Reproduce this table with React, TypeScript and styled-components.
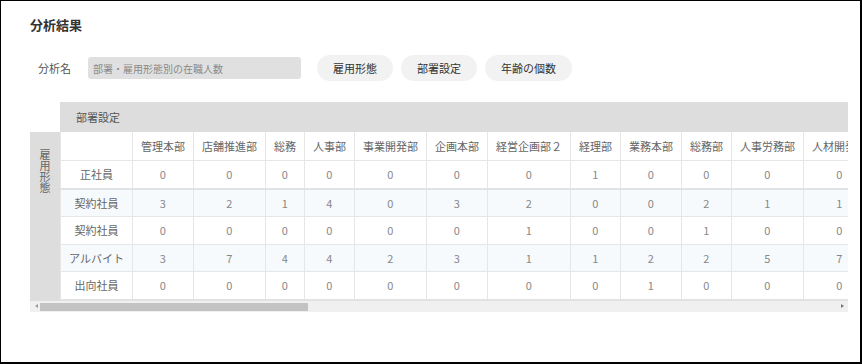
import React from "react";
import styled, { createGlobalStyle } from "styled-components";

const Global = createGlobalStyle`
  html, body { margin: 0; padding: 0; background: #fff; }
  body { font-family: "Noto Sans CJK JP", "Noto Sans", sans-serif; }
`;

const Frame = styled.div`
  box-sizing: border-box;
  width: 862px;
  height: 364px;
  border-style: solid;
  border-color: #000;
  border-width: 1px 2px 2px 1px;
  padding: 15px 0 0 29px;
  overflow: hidden;
`;

const Title = styled.h2`
  margin: 0;
  font-size: 13px;
  font-weight: bold;
  color: #333;
  line-height: 18px;
`;

const FormRow = styled.div`
  display: flex;
  align-items: center;
  margin-top: 21px;
  height: 26px;
`;

const Label = styled.span`
  font-size: 11px;
  color: #555;
  margin-left: 8px;
  width: 34px;
  margin-right: 16px;
  white-space: nowrap;
`;

const NameBox = styled.div`
  box-sizing: border-box;
  width: 213px;
  height: 22px;
  background: #e0e0e0;
  border-radius: 3px;
  padding-left: 5px;
  font-size: 10px;
  color: #888;
  display: flex;
  align-items: center;
  margin-right: 16px;
`;

const Pills = styled.div`
  display: flex;
  gap: 8px;
`;

const Pill = styled.button`
  height: 26px;
  border: none;
  border-radius: 13px;
  background: #f2f2f2;
  padding: 0 16px;
  font-family: inherit;
  font-size: 11px;
  color: #333;
  cursor: pointer;
`;

const Pivot = styled.div`
  width: 818px;
  margin-top: 21px;
`;

const ColBand = styled.div`
  margin-left: 30px;
  height: 30px;
  background: #dddddd;
  display: flex;
  align-items: center;
  padding-left: 16px;
  font-size: 11px;
  color: #555;
`;

const Body = styled.div`
  display: flex;
`;

const RowBand = styled.div`
  width: 30px;
  flex: none;
  background: #dddddd;
  display: flex;
  justify-content: center;
  padding-top: 17px;
  box-sizing: border-box;
`;

const VerticalText = styled.span`
  writing-mode: vertical-rl;
  font-size: 11px;
  line-height: 12px;
  color: #666;
`;

const Clip = styled.div`
  flex: 1;
  overflow: hidden;
`;

const Table = styled.table`
  border-collapse: collapse;
  font-size: 11px;
  white-space: nowrap;
`;

const Th = styled.th`
  height: 28px;
  padding: 0 8px;
  font-weight: normal;
  color: #666;
  border-left: 1px solid #e6e6e6;
  border-right: 1px solid #e6e6e6;
  border-bottom: 1px solid #e6e6e6;
  text-align: center;
`;

const Tr = styled.tr<{ $striped: boolean; $thick?: boolean }>`
  background: ${(p) => (p.$striped ? "#f6fafc" : "#fff")};
  border-bottom: ${(p) => (p.$thick ? "2px solid #e2e2e2" : "1px solid #e6e6e6")};
`;

const Td = styled.td<{ $head?: boolean }>`
  height: 26.5px;
  padding: 0 8px;
  text-align: center;
  color: ${(p) => (p.$head ? "#666" : "#888")};
  border-left: 1px solid #e6e6e6;
  border-right: 1px solid #e6e6e6;
`;

const ScrollBar = styled.div`
  height: 11px;
  background: #f0f0f0;
  display: flex;
  align-items: center;
  position: relative;
`;

const Arrow = styled.span<{ $right?: boolean }>`
  width: 0;
  height: 0;
  border-top: 2px solid transparent;
  border-bottom: 2px solid transparent;
  ${(p) =>
    p.$right
      ? "border-left: 3px solid #777; margin-left: auto; margin-right: 4px;"
      : "border-right: 3px solid #999; margin-left: 5px;"}
`;

const Thumb = styled.div`
  position: absolute;
  left: 10px;
  top: 2px;
  width: 268px;
  height: 8px;
  background: #c3c3c3;
`;

const cols = [
  "管理本部",
  "店舗推進部",
  "総務",
  "人事部",
  "事業開発部",
  "企画本部",
  "経営企画部２",
  "経理部",
  "業務本部",
  "総務部",
  "人事労務部",
  "人材開発部",
];

const rows: { name: string; vals: number[] }[] = [
  { name: "正社員", vals: [0, 0, 0, 0, 0, 0, 0, 1, 0, 0, 0, 0] },
  { name: "契約社員", vals: [3, 2, 1, 4, 0, 3, 2, 0, 0, 2, 1, 1] },
  { name: "契約社員", vals: [0, 0, 0, 0, 0, 0, 1, 0, 0, 1, 0, 0] },
  { name: "アルバイト", vals: [3, 7, 4, 4, 2, 3, 1, 1, 2, 2, 5, 7] },
  { name: "出向社員", vals: [0, 0, 0, 0, 0, 0, 0, 0, 1, 0, 0, 0] },
];

export default function App() {
  return (
    <>
      <Global />
      <Frame>
        <Title>分析結果</Title>
        <FormRow>
          <Label>分析名</Label>
          <NameBox>部署・雇用形態別の在職人数</NameBox>
          <Pills>
            <Pill>雇用形態</Pill>
            <Pill>部署設定</Pill>
            <Pill>年齢の個数</Pill>
          </Pills>
        </FormRow>
        <Pivot>
          <ColBand>部署設定</ColBand>
          <Body>
            <RowBand>
              <VerticalText>雇用形態</VerticalText>
            </RowBand>
            <Clip>
              <Table>
                <thead>
                  <tr>
                    <Th></Th>
                    {cols.map((c) => (
                      <Th key={c}>{c}</Th>
                    ))}
                  </tr>
                </thead>
                <tbody>
                  {rows.map((r, i) => (
                    <Tr key={i} $striped={i % 2 === 1} $thick={i === 0 || i === rows.length - 1}>
                      <Td $head>{r.name}</Td>
                      {r.vals.map((v, j) => (
                        <Td key={j}>{v}</Td>
                      ))}
                    </Tr>
                  ))}
                </tbody>
              </Table>
            </Clip>
          </Body>
          <ScrollBar>
            <Arrow />
            <Thumb />
            <Arrow $right />
          </ScrollBar>
        </Pivot>
      </Frame>
    </>
  );
}
